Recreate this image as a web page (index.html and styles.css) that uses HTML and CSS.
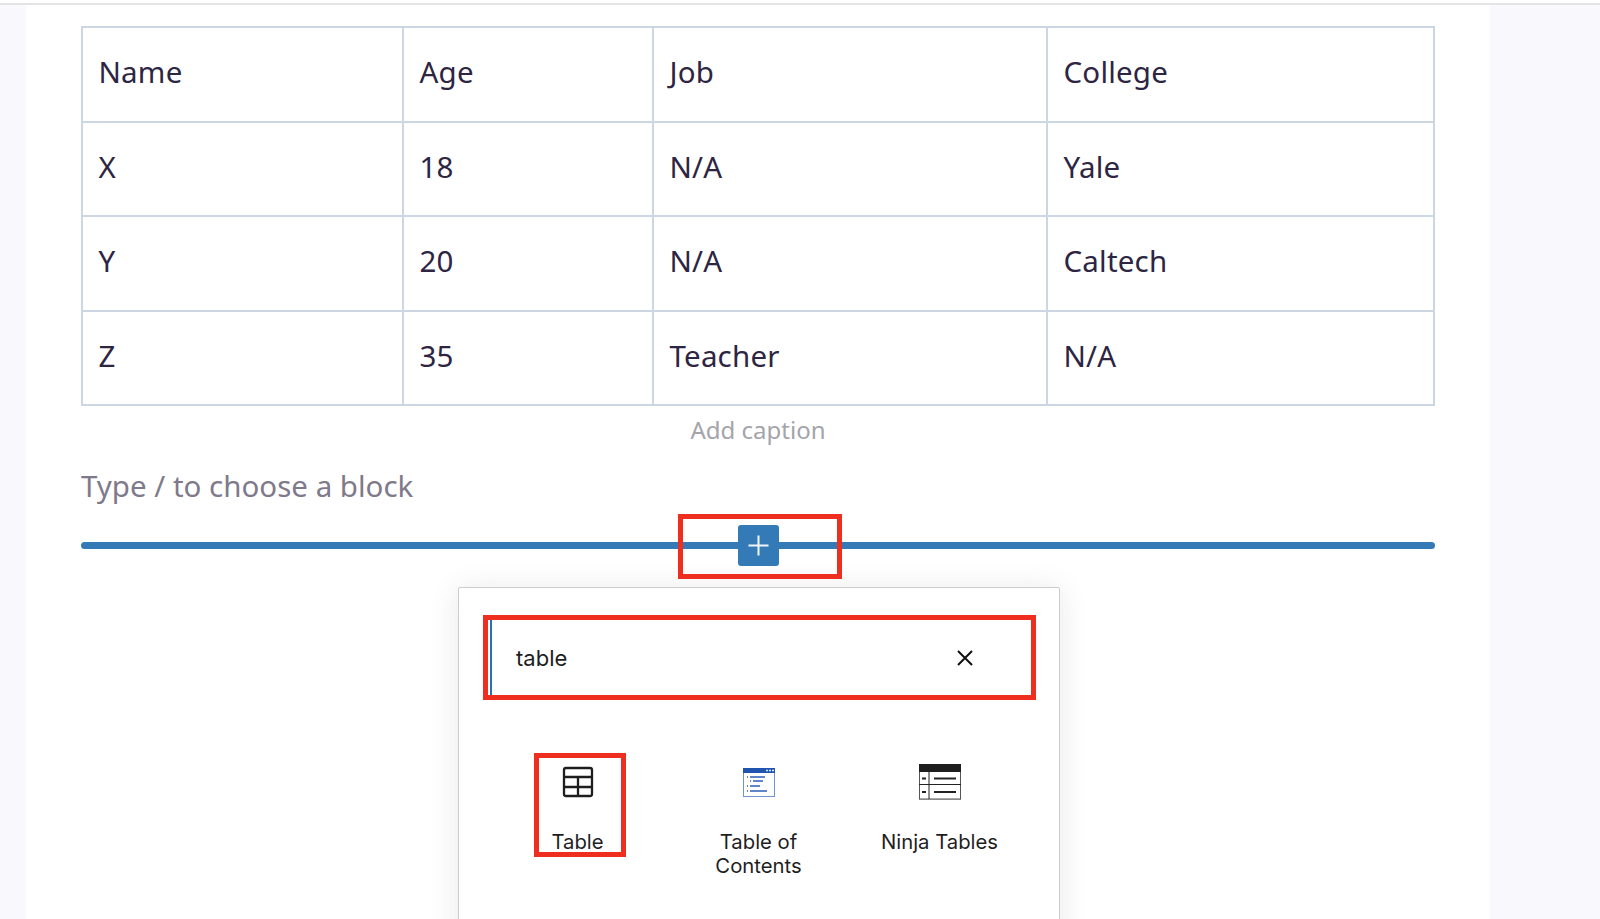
FILE: index.html
```html
<!DOCTYPE html>
<html lang="en">
<head>
<meta charset="utf-8">
<title>Table block</title>
<link rel="stylesheet" href="styles.css">
</head>
<body>
<div class="topline"></div>
<main class="page">
  <table class="grid">
    <colgroup><col class="c1"><col class="c2"><col class="c3"><col class="c4"></colgroup>
    <tr><td>Name</td><td>Age</td><td>Job</td><td>College</td></tr>
    <tr><td>X</td><td>18</td><td>N/A</td><td>Yale</td></tr>
    <tr><td>Y</td><td>20</td><td>N/A</td><td>Caltech</td></tr>
    <tr><td>Z</td><td>35</td><td>Teacher</td><td>N/A</td></tr>
  </table>
  <p class="caption">Add caption</p>
  <p class="placeholder">Type / to choose a block</p>
  <div class="inserter">
    <div class="line"></div>
    <button class="plus" type="button" aria-label="Add block">
      <svg width="23" height="23" viewBox="0 0 23 23"><path d="M11.500 1.500v20M1.500 11.500h20" stroke="#f1f5fa" stroke-width="2" fill="none"/></svg>
    </button>
    <span class="mark mark-plus"></span>
  </div>
  <section class="popover">
    <div class="search">
      <span class="query">table</span>
      <svg class="clear" width="18" height="18" viewBox="0 0 18 18"><path d="M2 2l14 14M16 2L2 16" stroke="#111" stroke-width="2" fill="none"/></svg>
      <span class="mark mark-search"></span>
    </div>
    <div class="results">
      <div class="item">
        <svg class="icon" width="32" height="32" viewBox="0 0 32 32"><rect x="2" y="2" width="28" height="28" rx="2" fill="none" stroke="#1e1e1e" stroke-width="2.300"/><path d="M2 11h28M2 21h28M16 11v19" stroke="#1e1e1e" stroke-width="2.300" fill="none"/></svg>
        <span class="label">Table</span>
        <span class="mark mark-item"></span>
      </div>
      <div class="item">
        <svg class="icon" width="34" height="32" viewBox="0 0 34 32"><rect x="1.500" y="2.500" width="31" height="28" fill="#fff" stroke="#6f93cc" stroke-width="1"/><rect x="1" y="2" width="32" height="5" fill="#1f55ae"/><path d="M24 4.500h2M27 4.500h2M30 4.500h2" stroke="#dfe8f6" stroke-width="1.500"/><path d="M8 11h15M11 15h10M8 20h10M8 25h17" stroke="#2a5fb6" stroke-width="1.500"/><path d="M5 11h1M8 15h1M5 20h1M5 25h1" stroke="#2a5fb6" stroke-width="1.500"/></svg>
        <span class="label">Table of Contents</span>
      </div>
      <div class="item">
        <svg class="icon" width="42" height="36" viewBox="0 0 42 36"><rect x=".5" y="1" width="41" height="34" fill="#fff" stroke="#555" stroke-width="1"/><rect x="0" y="0" width="42" height="8" fill="#1e1e1e"/><path d="M0 20.500h42M10 8v28" stroke="#222" stroke-width="1"/><path d="M3 14.500h4M3 28h4M15 14.500h22M15 28h22" stroke="#222" stroke-width="2"/><path d="M0 35.500h42" stroke="#888" stroke-width="1"/></svg>
        <span class="label">Ninja Tables</span>
      </div>
    </div>
  </section>
</main>
</body>
</html>
```
FILE: styles.css
```css
* { box-sizing: border-box; }
html, body { margin: 0; height: 919px; overflow: hidden; }
body { background: #f9f8fd; font-family: "Noto Sans", sans-serif; font-weight: 400; color: #2d2542; }
.topline { height: 5px; background: #fff; border-bottom: 2px solid #e4e4e5; }
.page { width: 1464px; height: 914px; margin-left: 26px; background: #fff; padding: 21px 55px 0; overflow: hidden; }
.grid { width: 1352px; table-layout: fixed; border-collapse: collapse; font-size: 29.500px; letter-spacing: .2px; }
.c1 { width: 321px; } .c2 { width: 250px; } .c3 { width: 394px; } .c4 { width: 387px; }
.grid td { height: 94.500px; padding: 0 16px 5px 15.500px; border: 2px solid #cdd6e3; }
.caption { margin: 9px 0 0; text-align: center; font-size: 24px; line-height: 30px; color: #a4a4ab; }
.placeholder { margin: 21px 0 0; font-size: 29.500px; line-height: 40px; color: #7f7a8b; }
.inserter { position: relative; height: 66px; margin-top: 7px; display: flex; align-items: center; justify-content: center; }
.line { position: absolute; left: 0; right: 0; top: 29px; height: 7px; border-radius: 4px; background: #347ab7; }
.plus { position: relative; width: 41px; height: 41px; margin-bottom: 2px; padding: 0; border: 0; border-radius: 3px; background: #347ab7; display: flex; align-items: center; justify-content: center; }
.mark { position: absolute; border: 5px solid #ee2e1f; }
.mark-plus { left: 597px; top: 1px; width: 164px; height: 65px; }
.popover { width: 602px; height: 400px; margin: 8px 0 0 377px; padding: 27px 24px 0; background: #fff; border: 1px solid #ccc; border-radius: 2px; box-shadow: 0 3px 30px rgba(25,30,35,.1); font-family: Inter, sans-serif; font-weight: 400; color: #1e1e1e; }
.search { position: relative; height: 85px; display: flex; align-items: center; justify-content: space-between; padding: 0 61px 0 33px; font-size: 22px; box-shadow: inset 7px 0 0 #fff, inset 9px 0 0 #2a6fb3; }
.clear { flex: none; }
.mark-search { left: 0; top: 0; width: 553px; height: 85px; }
.results { display: grid; grid-template-columns: 181px 181px 181px; margin-top: 64px; margin-left: 4px; }
.item { position: relative; display: flex; flex-direction: column; align-items: center; padding: 0 16px; font-size: 20.300px; line-height: 24px; text-align: center; }
.icon { height: 36px; margin-bottom: 30px; }
.mark-item { left: 47px; top: -11px; width: 92px; height: 104px; }
```
